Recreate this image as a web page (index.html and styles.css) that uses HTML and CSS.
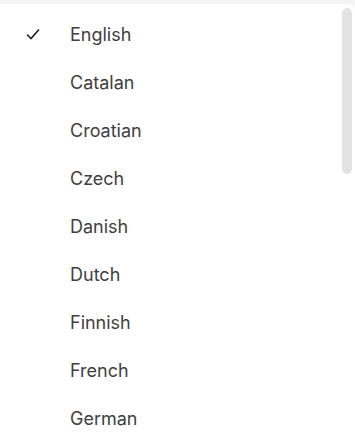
FILE: index.html
```html
<!DOCTYPE html>
<html lang="en">
<head>
    <meta charset="UTF-8">
    <meta name="viewport" content="width=device-width, initial-scale=1.0">
    <title>Language</title>
    <link rel="stylesheet" href="styles.css">
</head>
<body>

<div class="menu">
    <ul class="lang-list">
        <li class="lang-item selected">
            <span class="check">
                <svg width="14" height="12" viewBox="0 0 14 12"><path d="M1 6.5 L5 10.5 L13 1.5" fill="none" stroke="#222" stroke-width="1.6"/></svg>
            </span>
            <span>English</span>
        </li>
        <li class="lang-item"><span class="check"></span><span>Catalan</span></li>
        <li class="lang-item"><span class="check"></span><span>Croatian</span></li>
        <li class="lang-item"><span class="check"></span><span>Czech</span></li>
        <li class="lang-item"><span class="check"></span><span>Danish</span></li>
        <li class="lang-item"><span class="check"></span><span>Dutch</span></li>
        <li class="lang-item"><span class="check"></span><span>Finnish</span></li>
        <li class="lang-item"><span class="check"></span><span>French</span></li>
        <li class="lang-item"><span class="check"></span><span>German</span></li>
    </ul>
    <div class="scrollbar"></div>
</div>

</body>
</html>
```

FILE: styles.css
```css
body {
    margin: 0;
    background: #f4f4f4;
    font-family: Inter, "Noto Sans", sans-serif;
    height: 438px;
    overflow: hidden;
}

.menu {
    position: relative;
    margin-top: 4px;
    height: 434px;
    background: #ffffff;
    border-top-right-radius: 6px;
    overflow: hidden;
}

.lang-list {
    list-style: none;
    margin: 0;
    padding: 6px 0 0 0;
}

.lang-item {
    display: flex;
    align-items: center;
    height: 48px;
    font-size: 18px;
    color: #404040;
}

.check {
    width: 70px;
    padding-left: 26px;
    box-sizing: border-box;
    display: flex;
    align-items: center;
}

.scrollbar {
    position: absolute;
    top: 4px;
    right: 3px;
    width: 10px;
    height: 166px;
    border-radius: 5px;
    background: #e3e3e3;
}
```
